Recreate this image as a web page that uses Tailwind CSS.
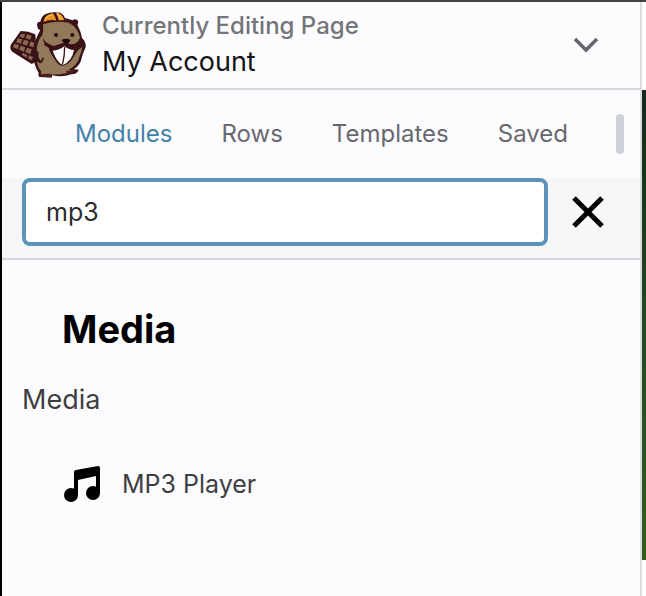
<!DOCTYPE html>
<html lang="en">
<head>
<meta charset="utf-8">
<meta name="viewport" content="width=device-width, initial-scale=1">
<title>My Account</title>
<script src="https://cdn.jsdelivr.net/npm/@tailwindcss/browser@4"></script>
</head>
<body class="flex min-h-screen border-t-2 border-t-[#444346] bg-white font-['Inter',sans-serif]">
<main class="flex min-w-0 grow flex-col border-r-2 border-l-2 border-r-[#dcdde1] border-l-black bg-[#fcfcfe]">
  <header class="flex h-22 items-center border-b-2 border-[#d6d7da] pr-10 pl-1.5">
    <svg class="h-[70px] w-20 shrink-0" viewBox="24 30 240 210" role="img" aria-label="Beaver Builder">
      <path d="M62 93Q85 93 106 103L112 182L95 192L38 156Q28 147 32 135Z" fill="#391116"/>
      <g fill="#8a6850">
        <path d="M63 101l13 2-4 11-13-3zM81 103l14 4-4 12-14-4zM53 115l14 3-5 13-13-4zM72 119l14 4-5 14-14-5zM92 124l11 4-3 14-13-5zM43 131l14 4-3 13-15-6zM62 137l14 5-4 13-14-6zM81 143l14 5-4 14-15-6zM66 158l15 6 0 9-14-7zM87 166l13 5-5 10-11-6z"/>
      </g>
      <path d="M112 79Q108 65 121 65Q124 49 137 42Q154 34 181 38Q190 42 195 54L218 61Q223 55 231 59Q238 64 232 74Q243 95 246 114Q259 126 257 142Q251 154 246 170Q242 195 221 208L236 209Q233 221 214 223Q186 233 157 226L155 233L118 231Q113 226 116 219Q109 208 104 192Q98 174 103 146Q105 116 121 90Q112 88 112 79Z" fill="#391116"/>
      <path d="M129 73Q161 60 207 68Q235 84 240 113Q232 134 209 133L196 127L162 138Q139 133 129 115Q130 133 146 143Q151 161 167 182Q178 200 191 197Q210 192 224 166Q231 150 247 141Q244 158 239 168Q235 188 219 201L204 211L224 213Q207 221 189 221Q166 226 147 221L122 223L124 215Q112 201 110 184Q122 195 130 184Q122 188 117 174Q108 165 111 140Q116 116 127 105Q131 91 129 73Z" fill="#91795a"/>
      <path d="M131 62Q136 44 159 40Q166 49 169 62Q150 57 131 66Z" fill="#e99221"/>
      <path d="M167 39Q182 37 190 53L192 61L176 61Q174 46 167 39Z" fill="#f0a12e"/>
      <path d="M136 58Q143 45 158 44M171 43Q179 46 181 55" fill="none" stroke="#f7bd55" stroke-width="4"/>
      <path d="M158 152Q178 151 193 139Q207 150 222 150Q217 182 188 196Q169 184 158 152Z" fill="#fff"/>
      <path d="M194 141Q194 168 187 195" fill="none" stroke="#391116" stroke-width="4"/>
      <path d="M133 132Q148 146 170 143Q188 142 197 127Q211 142 237 138M113 154Q111 174 117 184Q127 188 129 173" fill="none" stroke="#391116" stroke-width="5"/>
      <path d="M185 119Q198 113 211 119Q211 128 198 130Q187 128 185 119Z" fill="#17090b"/>
      <circle cx="168" cy="105" r="6" fill="#291011"/>
      <circle cx="217" cy="105" r="6" fill="#291011"/>
      <path d="M121 223h33v8h-33zM198 213l28-1-9 7h-17z" fill="#51221c"/>
    </svg>
    <div class="min-w-0 grow pb-0.5 pl-3.5">
      <p class="text-[24px] leading-9 font-medium text-[#747579]">Currently Editing Page</p>
      <h1 class="text-[27px] leading-9 text-[#141416]">My Account</h1>
    </div>
    <button type="button" aria-label="Open page menu" class="shrink-0">
      <svg class="h-7 w-7" viewBox="0 0 28 28" fill="none" stroke="#66676b" stroke-width="3.6"><path d="M3 8l11 11 11-11"/></svg>
    </button>
  </header>

  <nav class="flex h-22 items-center pr-4" aria-label="Content panel">
    <div class="flex grow items-center justify-between pr-12 pl-[73px] text-[24px] text-[#68696f]">
      <a href="#modules" aria-current="page" class="text-[#4581a6]">Modules</a>
      <a href="#rows">Rows</a>
      <a href="#templates">Templates</a>
      <a href="#saved">Saved</a>
    </div>
    <div class="h-10 w-2 shrink-0 rounded-full bg-[#cfd1d8]"></div>
  </nav>

  <form class="flex h-[82px] items-start border-b-2 border-[#d6d7da] bg-[#f5f6f8] pr-8 pl-5" role="search">
    <input type="text" aria-label="Search modules" value="mp3" class="h-17 min-w-0 grow rounded-lg border-4 border-[#5c93b9] bg-white px-5 text-[25px] text-[#2c2c2e] outline-none">
    <button type="reset" aria-label="Clear search" class="ml-5 flex h-17 w-10 shrink-0 items-center justify-center">
      <svg class="h-10 w-10" viewBox="0 0 40 40" fill="none" stroke="#000" stroke-width="5"><path d="M6 6l28 28M34 6L6 34"/></svg>
    </button>
  </form>

  <section class="px-5 pt-11">
    <h2 class="pl-10 text-[38px] leading-[50px] font-bold text-black">Media</h2>
    <h3 class="mt-[26px] text-[27px] leading-10 text-[#3f3f43]">Media</h3>
    <ul class="mt-11">
      <li>
        <a href="#mp3-player" class="flex items-center pl-10 text-[25px] leading-10 text-[#3f3f43]">
          <svg class="mr-5 h-10 w-10 shrink-0" viewBox="0 0 40 40" aria-hidden="true">
            <path d="M12 8Q12 6 14 6L36 2Q38 2 38 4V29H34V12L16 16V31H12Z"/>
            <circle cx="9" cy="31" r="7"/>
            <circle cx="31" cy="29" r="7"/>
          </svg>
          MP3 Player
        </a>
      </li>
    </ul>
  </section>
</main>
<aside class="flex w-1 shrink-0 flex-col pt-22 pb-9" aria-label="Page preview">
  <div class="grow bg-linear-to-b from-[#14291a] via-[#234a21] to-[#345c20]"></div>
</aside>
</body>
</html>
